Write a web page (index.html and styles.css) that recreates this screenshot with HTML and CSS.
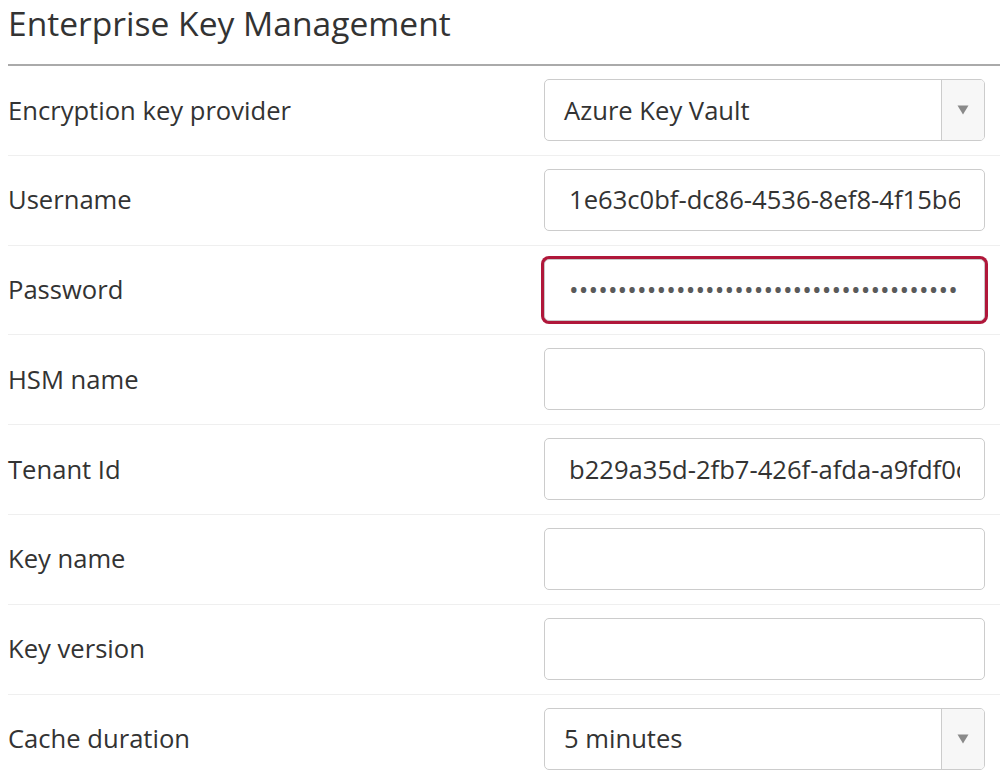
FILE: index.html
```html
<!DOCTYPE html>
<html lang="en">
<head>
<meta charset="utf-8">
<title>Enterprise Key Management</title>
<link rel="stylesheet" href="styles.css">
</head>
<body>
<div class="page">
  <h1 class="title">Enterprise Key Management</h1>
  <form class="form">
    <div class="row">
      <label class="label">Encryption key provider</label>
      <div class="select">
        <span class="select-value">Azure Key Vault</span>
        <span class="select-arrow"><svg width="12" height="10" viewBox="0 0 12 10"><path d="M0.5 0.5 H11.5 L6 9.5 Z" fill="#8a8a8a"/></svg></span>
      </div>
    </div>
    <div class="row">
      <label class="label">Username</label>
      <input class="input" type="text" value="1e63c0bf-dc86-4536-8ef8-4f15b6a2d9c1">
    </div>
    <div class="row">
      <label class="label">Password</label>
      <input class="input input-focus" type="password" value="0123456789012345678901234567890123456789">
    </div>
    <div class="row">
      <label class="label">HSM name</label>
      <input class="input" type="text" value="">
    </div>
    <div class="row">
      <label class="label">Tenant Id</label>
      <input class="input" type="text" value="b229a35d-2fb7-426f-afda-a9fdf0c1e7b4">
    </div>
    <div class="row">
      <label class="label">Key name</label>
      <input class="input" type="text" value="">
    </div>
    <div class="row">
      <label class="label">Key version</label>
      <input class="input" type="text" value="">
    </div>
    <div class="row">
      <label class="label">Cache duration</label>
      <div class="select">
        <span class="select-value">5 minutes</span>
        <span class="select-arrow"><svg width="12" height="10" viewBox="0 0 12 10"><path d="M0.5 0.5 H11.5 L6 9.5 Z" fill="#8a8a8a"/></svg></span>
      </div>
    </div>
  </form>
</div>
</body>
</html>
```

FILE: styles.css
```css
html, body {
  margin: 0;
  padding: 0;
  background: #ffffff;
}

body {
  font-family: "Open Sans", "DejaVu Sans", sans-serif;
  color: #333333;
  overflow: hidden;
}

.page {
  padding-left: 8px;
  width: 1010px;
}

.title {
  margin: 0;
  font-size: 33.6px;
  font-weight: 400;
  line-height: 44px;
  padding-top: 1px;
  padding-bottom: 19px;
  color: #333333;
  border-bottom: 2px solid #aaaaaa;
}

.form {
  display: flex;
  flex-direction: column;
}

.row {
  display: flex;
  align-items: flex-start;
  box-sizing: border-box;
  height: 89.8px;
  padding-top: 13px;
  border-bottom: 1px solid #efefef;
}

.label {
  width: 536px;
  height: 62px;
  display: flex;
  align-items: center;
  font-size: 25.6px;
  color: #333333;
}

.input {
  box-sizing: border-box;
  width: 441px;
  height: 62px;
  border: 1px solid #cccccc;
  border-radius: 5px;
  padding: 0 24px;
  font-family: "Open Sans", "DejaVu Sans", sans-serif;
  font-size: 25.6px;
  color: #333333;
  background: #ffffff;
  outline: none;
}

.input-focus {
  border-color: #c8c8c8;
  box-shadow: 0 0 0 3px #b0173a;
  letter-spacing: 0.1px;
  color: #5a5a5a;
}

.select {
  box-sizing: border-box;
  width: 441px;
  height: 62px;
  border: 1px solid #cccccc;
  border-radius: 5px;
  display: flex;
  align-items: stretch;
  background: #ffffff;
  overflow: hidden;
}

.select-value {
  flex: 1;
  display: flex;
  align-items: center;
  padding-left: 19px;
  font-size: 25.6px;
  color: #333333;
}

.select-arrow {
  width: 42px;
  border-left: 1px solid #cccccc;
  background: #f7f7f7;
  display: flex;
  align-items: center;
  justify-content: center;
}
```
